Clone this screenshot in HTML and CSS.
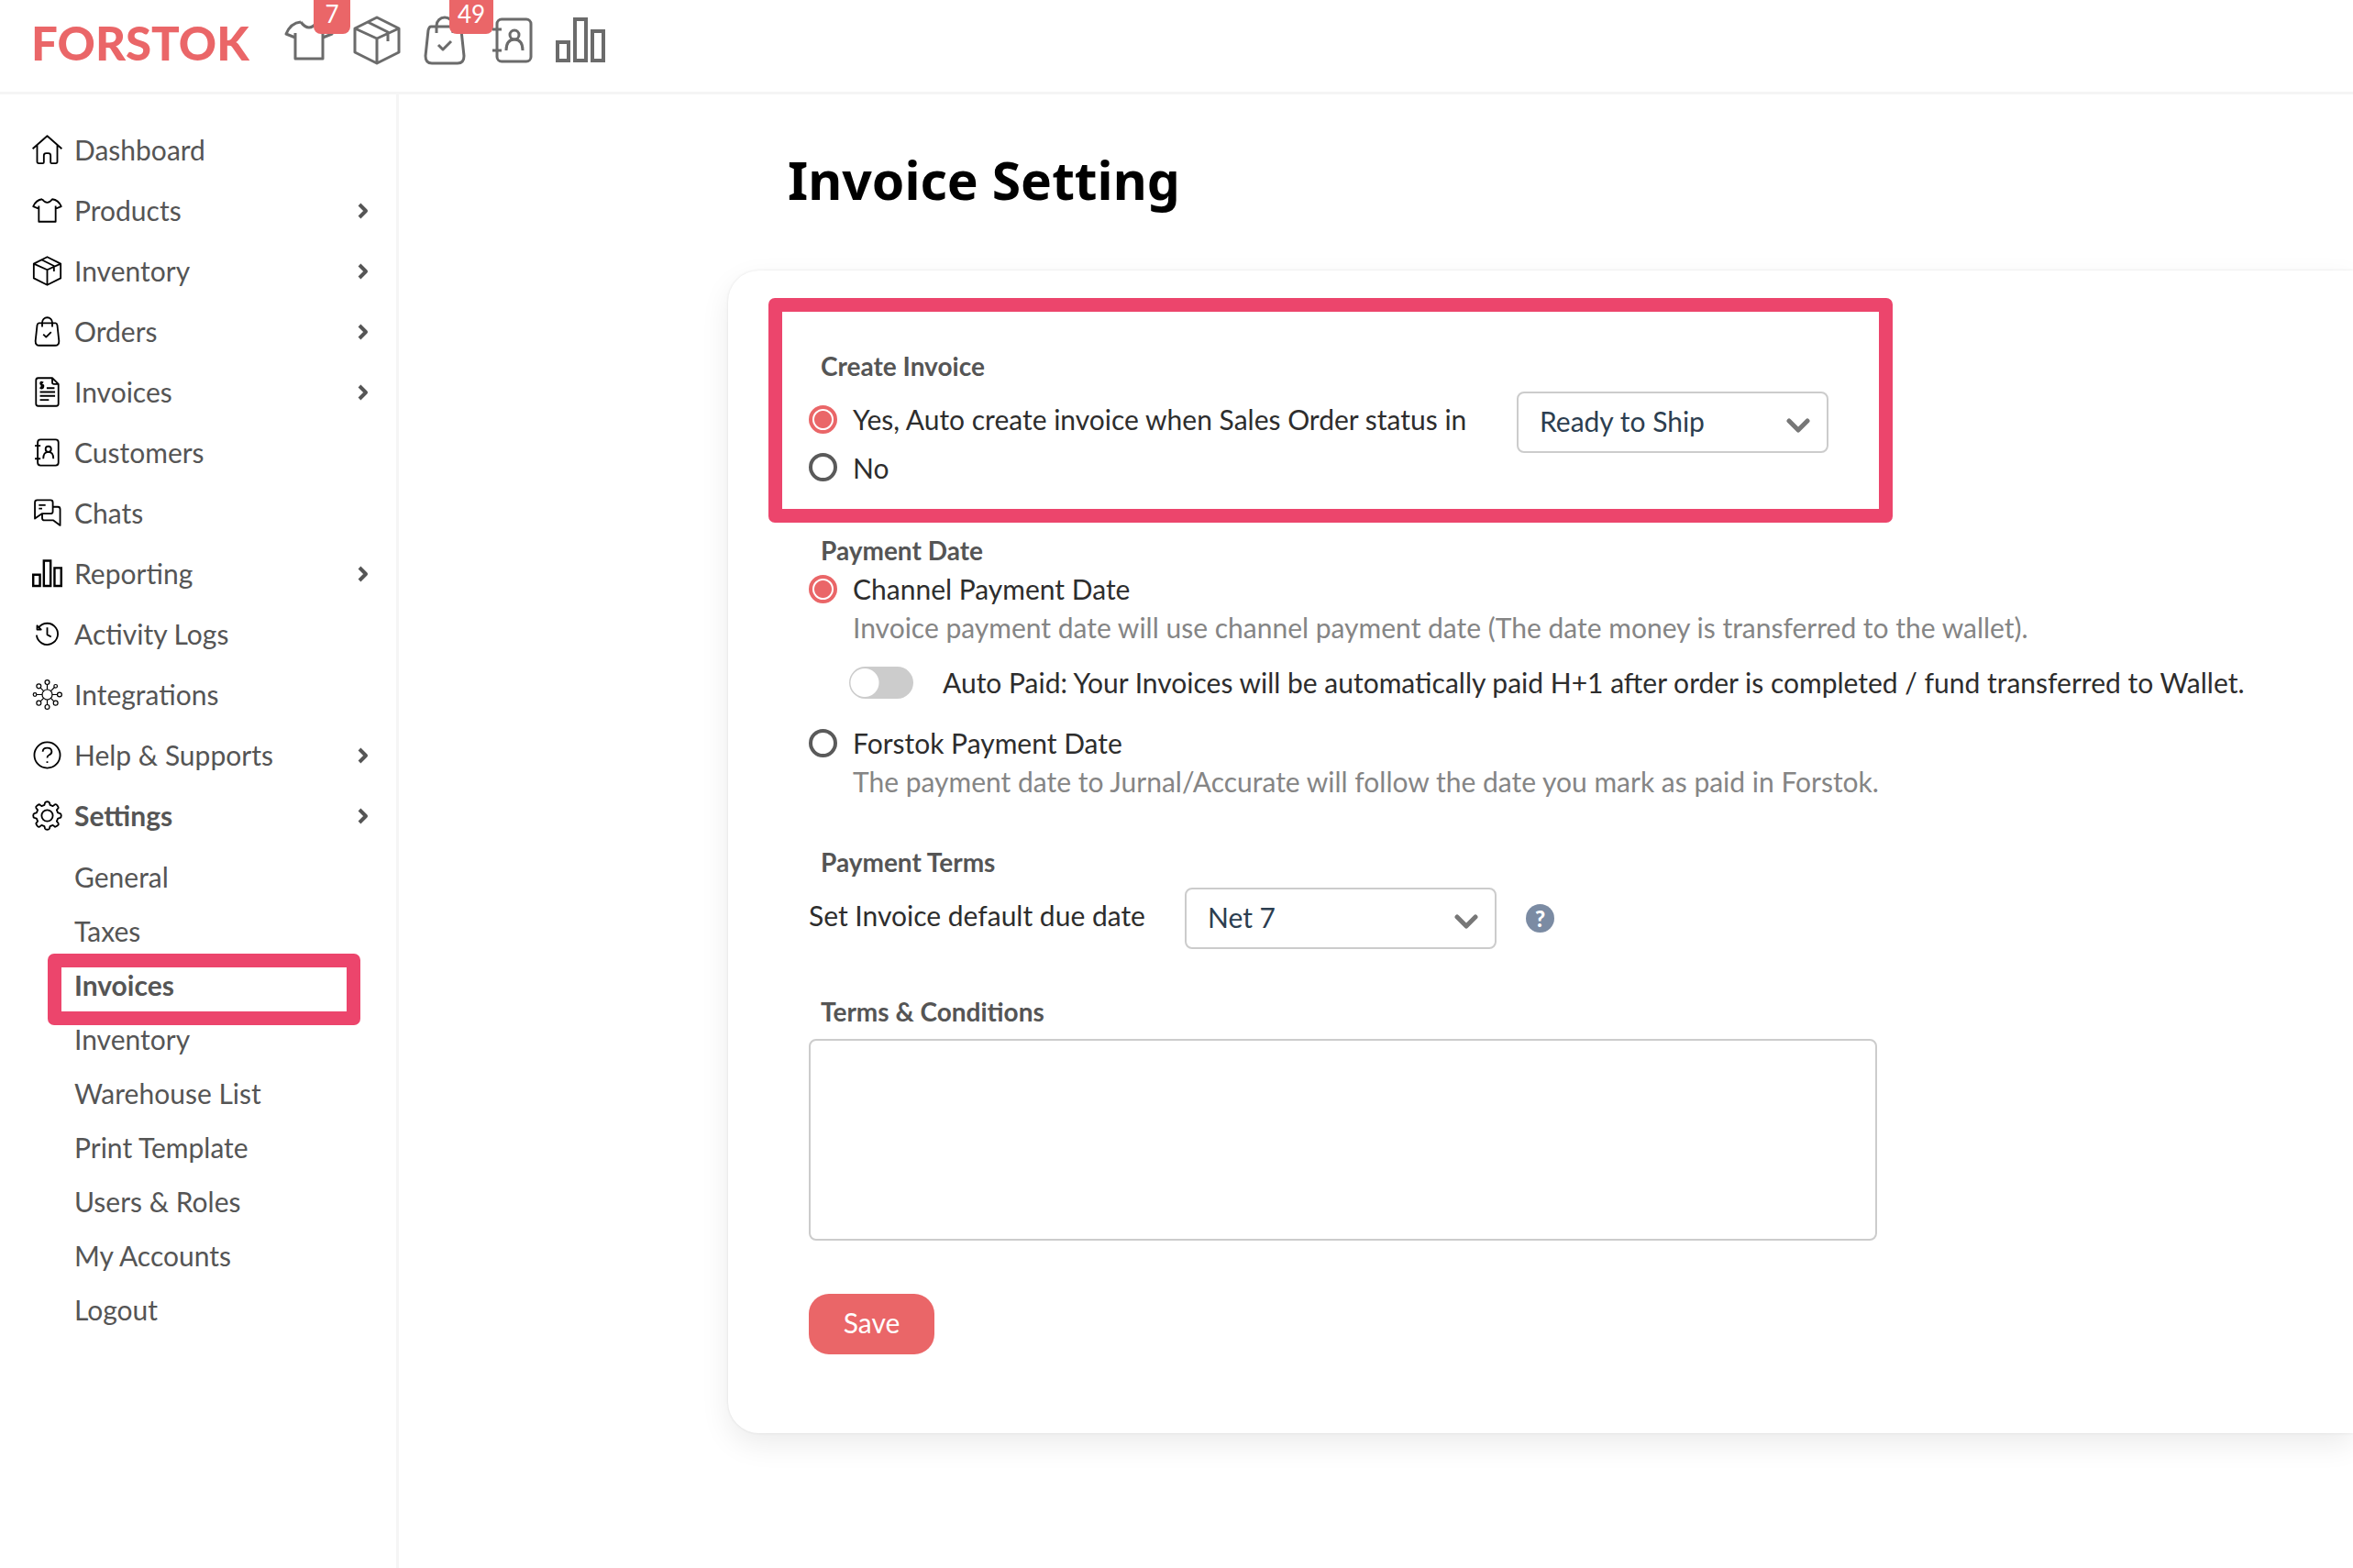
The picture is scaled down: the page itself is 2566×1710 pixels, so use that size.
FILE: index.html
```html
<!DOCTYPE html>
<html lang="en">
<head>
<meta charset="utf-8">
<title>Invoice Setting</title>
<meta name="viewport" content="width=device-width, initial-scale=1">
<link rel="stylesheet" href="styles.css">
</head>
<body>
<svg class="sprite" aria-hidden="true">
  <symbol id="home" viewBox="0 0 54 54"><path d="M1 25 27 2 53 25M9 19V48q0 3 3 3h7q2 0 2-2V37q0-4 4-4h4q4 0 4 4V49q0 2 2 2h7q3 0 3-3V19"/></symbol>
  <symbol id="shirt" viewBox="0 0 54 54"><path d="M18 7Q27 19 36 7Q47 8 52 20L42 24M18 7Q7 8 2 20L12 24M12 19V47H42V19"/></symbol>
  <symbol id="box" viewBox="0 0 54 54"><path d="M27 2 51 14V40L27 52 3 40V14ZM3 14 27 25 51 14M27 25V52M17 7 39 18V28"/></symbol>
  <symbol id="bag" viewBox="0 0 54 54"><path d="M12 12H42q2 0 3 4L48 44q0 8-7 8H13q-7 0-7-8L9 16q1-4 3-4ZM18 19V11a9 9 0 0 1 18 0V19M20 32l5 5 9-9"/></symbol>
  <symbol id="invoice" viewBox="0 0 54 54"><path d="M11 2H36L47 13V48q0 4-4 4H11q-4 0-4-4V6q0-4 4-4ZM36 2V10q0 3 3 3H47M26 20H40M14 27H41M14 34H41M14 41H30M20 10q-5-2-5 1t3 3 2 4-6 1M17 8V22"/></symbol>
  <symbol id="contact" viewBox="0 0 54 54"><rect x="10" y="4" width="37" height="46" rx="5"/><path d="M5 15H15M5 38H15M20 38Q20 26 29 26T38 38"/><circle cx="29" cy="21" r="5"/></symbol>
  <symbol id="chat" viewBox="0 0 54 54"><path d="M5 37V8q0-4 4-4H33q4 0 4 4V24q0 4-4 4H18ZM37 16H46q4 0 4 4V49L38 40H22q-4 0-4-4V28M12 13H24M12 19H18"/></symbol>
  <symbol id="bars" viewBox="0 0 54 54"><path class="heavy" d="M2 29H14V49H2ZM21 4H33V49H21ZM40 17H52V49H40Z"/></symbol>
  <symbol id="history" viewBox="0 0 54 54"><path d="M8 29A19 19 0 1 0 12 15M27 15V28L34 32M9 12V19H16Z"/></symbol>
  <symbol id="hub" viewBox="0 0 54 54"><g class="light"><circle cx="27" cy="27" r="9"/><circle cx="27" cy="5" r="4"/><circle cx="27" cy="49" r="4"/><circle cx="5" cy="27" r="3"/><circle cx="49" cy="27" r="4"/><circle cx="12" cy="12" r="4"/><circle cx="42" cy="12" r="3"/><circle cx="12" cy="42" r="4"/><circle cx="42" cy="42" r="4"/><path d="M27 9V18M27 36V45M8 27H18M36 27H45M15 15 21 21M40 14 33 21M15 39 21 33M39 39 33 33"/></g></symbol>
  <symbol id="help" viewBox="0 0 54 54"><circle cx="27" cy="27" r="23"/><path d="M19 21q0-7 8-7t8 7q0 4-5 6-3 1-3 5M27 38V41"/></symbol>
  <symbol id="gear" viewBox="0 0 54 54"><circle cx="27" cy="27" r="10"/><path transform="translate(27 27)" d="M-5-19-4-23Q-3-25 0-25T4-23L5-19 10-17 14-20Q16-21 18-18T20-14L17-10 19-5 23-4Q25-3 25 0T23 4L19 5 17 10 20 14Q21 16 18 18T14 20L10 17 5 19 4 23Q3 25 0 25T-4 23L-5 19-10 17-14 20Q-16 21-18 18T-20 14L-17 10-19 5-23 4Q-25 3-25 0T-23-4L-19-5-17-10-20-14Q-21-16-18-18T-14-20L-10-17Z"/></symbol>
  <symbol id="right" viewBox="0 0 12 20"><path d="M2 3 9 10 2 17"/></symbol>
  <symbol id="down" viewBox="0 0 26 16"><path d="M3 3 13 13 23 3"/></symbol>
</svg>

<header class="topbar">
  <a class="logo" href="#">FORSTOK</a>
  <nav class="shortcuts" aria-label="Shortcuts">
    <a class="shortcut" href="#" aria-label="Products"><svg class="icon"><use href="#shirt"/></svg><span class="badge">7</span></a>
    <a class="shortcut" href="#" aria-label="Inventory"><svg class="icon"><use href="#box"/></svg></a>
    <a class="shortcut" href="#" aria-label="Orders"><svg class="icon"><use href="#bag"/></svg><span class="badge">49</span></a>
    <a class="shortcut" href="#" aria-label="Customers"><svg class="icon"><use href="#contact"/></svg></a>
    <a class="shortcut" href="#" aria-label="Reporting"><svg class="icon"><use href="#bars"/></svg></a>
  </nav>
</header>

<div class="layout">
  <nav class="sidebar" aria-label="Main">
    <ul class="menu">
      <li><a class="item" href="#"><svg class="icon"><use href="#home"/></svg>Dashboard</a></li>
      <li><a class="item" href="#"><svg class="icon"><use href="#shirt"/></svg>Products<svg class="more"><use href="#right"/></svg></a></li>
      <li><a class="item" href="#"><svg class="icon"><use href="#box"/></svg>Inventory<svg class="more"><use href="#right"/></svg></a></li>
      <li><a class="item" href="#"><svg class="icon"><use href="#bag"/></svg>Orders<svg class="more"><use href="#right"/></svg></a></li>
      <li><a class="item" href="#"><svg class="icon"><use href="#invoice"/></svg>Invoices<svg class="more"><use href="#right"/></svg></a></li>
      <li><a class="item" href="#"><svg class="icon"><use href="#contact"/></svg>Customers</a></li>
      <li><a class="item" href="#"><svg class="icon"><use href="#chat"/></svg>Chats</a></li>
      <li><a class="item" href="#"><svg class="icon"><use href="#bars"/></svg>Reporting<svg class="more"><use href="#right"/></svg></a></li>
      <li><a class="item" href="#"><svg class="icon"><use href="#history"/></svg>Activity Logs</a></li>
      <li><a class="item" href="#"><svg class="icon"><use href="#hub"/></svg>Integrations</a></li>
      <li><a class="item" href="#"><svg class="icon"><use href="#help"/></svg>Help &amp; Supports<svg class="more"><use href="#right"/></svg></a></li>
      <li><a class="item active" href="#"><svg class="icon"><use href="#gear"/></svg>Settings<svg class="more"><use href="#right"/></svg></a>
        <ul class="submenu">
          <li><a class="subitem" href="#">General</a></li>
          <li><a class="subitem" href="#">Taxes</a></li>
          <li class="marked"><a class="subitem active" href="#" aria-current="page">Invoices</a></li>
          <li><a class="subitem" href="#">Inventory</a></li>
          <li><a class="subitem" href="#">Warehouse List</a></li>
          <li><a class="subitem" href="#">Print Template</a></li>
          <li><a class="subitem" href="#">Users &amp; Roles</a></li>
          <li><a class="subitem" href="#">My Accounts</a></li>
          <li><a class="subitem" href="#">Logout</a></li>
        </ul>
      </li>
    </ul>
  </nav>

  <main class="content">
    <h1 class="title">Invoice Setting</h1>
    <form class="card">
      <div class="section framed" role="radiogroup" aria-labelledby="create-title">
        <h2 class="heading" id="create-title">Create Invoice</h2>
        <div class="row">
          <label class="choice tall"><input class="radio" type="radio" name="create" checked>Yes, Auto create invoice when Sales Order status in</label>
          <span class="picker">
            <select class="select" aria-label="Sales Order status"><option>Ready to Ship</option></select>
            <svg class="arrow"><use href="#down"/></svg>
          </span>
        </div>
        <label class="choice short"><input class="radio" type="radio" name="create">No</label>
      </div>

      <div class="section dates" role="radiogroup" aria-labelledby="date-title">
        <h2 class="heading" id="date-title">Payment Date</h2>
        <label class="choice"><input class="radio" type="radio" name="date" checked>Channel Payment Date</label>
        <p class="hint">Invoice payment date will use channel payment date (The date money is transferred to the wallet).</p>
        <label class="auto"><input class="toggle" type="checkbox" role="switch">Auto Paid: Your Invoices will be automatically paid H+1 after order is completed / fund transferred to Wallet.</label>
        <label class="choice"><input class="radio" type="radio" name="date">Forstok Payment Date</label>
        <p class="hint">The payment date to Jurnal/Accurate will follow the date you mark as paid in Forstok.</p>
      </div>

      <div class="section spaced">
        <h2 class="heading">Payment Terms</h2>
        <div class="row">
          <label class="caption" for="due">Set Invoice default due date</label>
          <span class="picker">
            <select class="select" id="due"><option>Net 7</option></select>
            <svg class="arrow"><use href="#down"/></svg>
          </span>
          <button class="info" type="button" aria-label="Help">?</button>
        </div>
      </div>

      <div class="section spaced">
        <label class="heading" for="terms">Terms &amp; Conditions</label>
        <textarea class="terms" id="terms"></textarea>
        <button class="save" type="submit">Save</button>
      </div>
    </form>
  </main>
</div>
</body>
</html>
```
FILE: styles.css
```css
* { box-sizing: border-box; }

body {
  margin: 0;
  min-height: 100vh;
  display: flex;
  flex-direction: column;
  background: #fff;
  color: #2d2d2d;
  font: 30px/40px Lato, "Open Sans", sans-serif;
  overflow-x: hidden;
}

a { color: inherit; text-decoration: none; }
ul { list-style: none; margin: 0; padding: 0; }
input, select, textarea, button { font: inherit; margin: 0; }

.sprite { position: absolute; width: 0; height: 0; }

.icon, .more, .arrow {
  fill: none;
  stroke: currentColor;
  stroke-linejoin: round;
  flex: none;
}
.heavy { stroke-width: 4; stroke-linejoin: miter; }
.light { stroke-width: 2; }

/* Top bar */
.topbar {
  display: flex;
  align-items: flex-start;
  height: 103px;
  padding: 17px 34px 0;
  border-bottom: 3px solid #f5f5f5;
}
.logo {
  width: 276px;
  color: #ea6668;
  font-size: 51px;
  font-weight: 900;
  line-height: 60px;
}
.shortcuts { display: flex; gap: 20px; color: #6b6b6b; }
.shortcut { position: relative; display: flex; }
.shortcut .icon { width: 54px; height: 54px; stroke-width: 3; }
.badge {
  position: absolute;
  top: -24px;
  left: 32px;
  min-width: 40px;
  padding: 2px 9px;
  border-radius: 8px;
  background: #ea6668;
  color: #fff;
  font-size: 26px;
  line-height: 40px;
  text-align: center;
}

/* Sidebar */
.layout { display: flex; flex: 1; }
.sidebar {
  flex: none;
  width: 435px;
  padding: 27px 30px 40px 35px;
  border-right: 3px solid #f5f5f5;
  color: #555;
}
.item {
  display: flex;
  align-items: center;
  gap: 13px;
  height: 66px;
}
.item .icon { width: 33px; height: 33px; color: #000; stroke-width: 3; }
.more { width: 12px; height: 20px; margin: 2px 0 0 auto; stroke-width: 4; }
.active { font-weight: 700; }
.submenu { padding: 5px 0 0 46px; }
.subitem { display: block; line-height: 59px; }
.marked { position: relative; }
.marked::after {
  content: "";
  position: absolute;
  inset: -5px 9px -14px -29px;
  border: 15px solid #ec456c;
  border-radius: 7px;
  pointer-events: none;
}

/* Page */
.content { flex: 1; min-width: 0; padding: 53px 0 60px 359px; }
.title {
  margin: 0 0 59px 65px;
  color: #000;
  font: 700 57px/80px "Noto Sans", sans-serif;
}
.card {
  padding: 30px 0 86px 44px;
  border-radius: 34px 0 0 34px;
  box-shadow: 0 12px 32px rgba(0, 0, 0, .08), 0 0 3px rgba(0, 0, 0, .1);
}
.section { padding: 0 44px; }
.framed {
  width: 1226px;
  max-width: 100%;
  padding: 39px 29px 30px;
  border: 15px solid #ec456c;
  border-radius: 7px;
}
.dates { margin-top: 10px; }
.spaced { margin-top: 48px; }

.heading {
  display: block;
  margin: 0;
  padding-left: 13px;
  color: #555;
  font-size: 28px;
  font-weight: 700;
  line-height: 40px;
}
.row { display: flex; align-items: flex-start; gap: 32px; margin-top: 8px; }
.choice { display: flex; align-items: center; gap: 17px; line-height: 44px; }
.tall { width: 740px; line-height: 60px; }
.caption { width: 378px; line-height: 60px; }
.short { line-height: 30px; }
.hint { margin: 0 0 0 48px; color: #858585; }
.auto { display: flex; align-items: center; gap: 32px; margin: 20px 0 24px 44px; }

.radio {
  appearance: none;
  flex: none;
  width: 31px;
  height: 31px;
  border: 4px solid #5a5a5a;
  border-radius: 50%;
  background: #fff;
}
.radio:checked {
  border-color: #ea6668;
  background: radial-gradient(circle, #ea6668 9px, #fff 10px);
}
.toggle {
  appearance: none;
  flex: none;
  width: 70px;
  height: 35px;
  border-radius: 18px;
  background: radial-gradient(circle at 17px 50%, #fff 15px, #ccc 16px);
}

.picker { position: relative; display: flex; width: 340px; height: 67px; }
.select {
  appearance: none;
  width: 100%;
  padding: 0 60px 4px 23px;
  border: 2px solid #ccc;
  border-radius: 8px;
  background: #fff;
  color: #2c3e50;
}
.arrow {
  position: absolute;
  top: 29px;
  right: 20px;
  width: 26px;
  height: 16px;
  color: #777;
  stroke-width: 5;
  stroke-linecap: round;
  pointer-events: none;
}
.info {
  align-self: center;
  width: 31px;
  height: 31px;
  padding: 0;
  border: 0;
  border-radius: 50%;
  background: #7b8ba3;
  color: #fff;
  font-size: 24px;
  font-weight: 900;
  line-height: 31px;
}
.terms {
  display: block;
  width: 1165px;
  max-width: 100%;
  height: 220px;
  margin-top: 10px;
  padding: 16px 23px;
  border: 2px solid #ccc;
  border-radius: 8px;
  resize: none;
}
.save {
  display: block;
  min-width: 137px;
  height: 66px;
  margin-top: 58px;
  padding: 0 32px 4px;
  border: 0;
  border-radius: 22px;
  background: #ea6668;
  color: #fff;
}
```
